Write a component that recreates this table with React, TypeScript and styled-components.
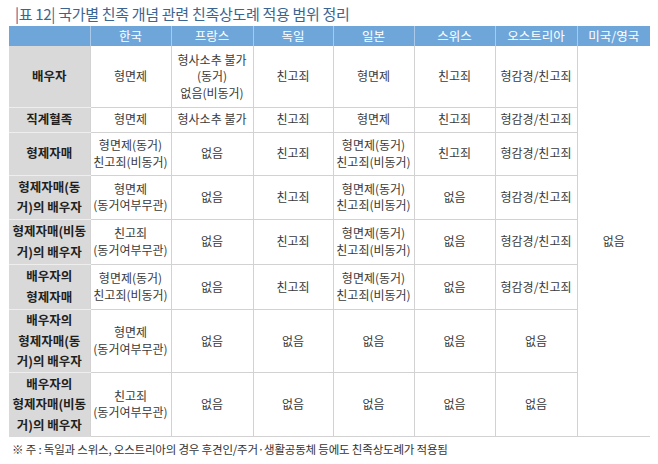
import styled, { createGlobalStyle } from 'styled-components';

const GlobalStyle = createGlobalStyle`
    html, body {
        margin: 0;
        padding: 0;
        background: #ffffff;
    }
    body {
        font-family: "Noto Sans CJK KR", "Noto Sans", sans-serif;
        color: #333;
    }
`;

const COUNTRIES = ['한국', '프랑스', '독일', '일본', '스위스', '오스트리아', '미국/영국'];
const COL_WIDTHS = [81, 81, 82, 80, 81, 81, 82, 73];

interface RowData {
    label: string[];
    height: number;
    cells: string[][];
}

const ROWS: RowData[] = [
    {
        label: ['배우자'],
        height: 61,
        cells: [['형면제'], ['형사소추 불가', '(동거)', '없음(비동거)'], ['친고죄'], ['형면제'], ['친고죄'], ['형감경/친고죄']],
    },
    {
        label: ['직계혈족'],
        height: 25,
        cells: [['형면제'], ['형사소추 불가'], ['친고죄'], ['형면제'], ['친고죄'], ['형감경/친고죄']],
    },
    {
        label: ['형제자매'],
        height: 43,
        cells: [['형면제(동거)', '친고죄(비동거)'], ['없음'], ['친고죄'], ['형면제(동거)', '친고죄(비동거)'], ['친고죄'], ['형감경/친고죄']],
    },
    {
        label: ['형제자매(동', '거)의 배우자'],
        height: 44,
        cells: [['형면제', '(동거여부무관)'], ['없음'], ['친고죄'], ['형면제(동거)', '친고죄(비동거)'], ['없음'], ['형감경/친고죄']],
    },
    {
        label: ['형제자매(비동', '거)의 배우자'],
        height: 45,
        cells: [['친고죄', '(동거여부무관)'], ['없음'], ['친고죄'], ['형면제(동거)', '친고죄(비동거)'], ['없음'], ['형감경/친고죄']],
    },
    {
        label: ['배우자의', '형제자매'],
        height: 45,
        cells: [['형면제(동거)', '친고죄(비동거)'], ['없음'], ['친고죄'], ['형면제(동거)', '친고죄(비동거)'], ['없음'], ['형감경/친고죄']],
    },
    {
        label: ['배우자의', '형제자매(동', '거)의 배우자'],
        height: 63,
        cells: [['형면제', '(동거여부무관)'], ['없음'], ['없음'], ['없음'], ['없음'], ['없음']],
    },
    {
        label: ['배우자의', '형제자매(비동', '거)의 배우자'],
        height: 64,
        cells: [['친고죄', '(동거여부무관)'], ['없음'], ['없음'], ['없음'], ['없음'], ['없음']],
    },
];

const Lines = ({ lines }: { lines: string[] }) => (
    <>
        {lines.map((line, i) => (
            <Line key={line + i}>{line}</Line>
        ))}
    </>
);

const App = () => {
    const totalBody = ROWS.reduce((sum, row) => sum + row.height, 0);

    return (
        <Page>
            <GlobalStyle />
            <Title>|표 12| 국가별 친족 개념 관련 친족상도례 적용 범위 정리</Title>
            <Table>
                <colgroup>
                    {COL_WIDTHS.map((w, i) => (
                        <col key={i} style={{ width: w }} />
                    ))}
                </colgroup>
                <thead>
                    <tr>
                        <HeadCell />
                        {COUNTRIES.map((c) => (
                            <HeadCell key={c}>{c}</HeadCell>
                        ))}
                    </tr>
                </thead>
                <tbody>
                    {ROWS.map((row, r) => (
                        <tr key={r} style={{ height: row.height }}>
                            <RowHead $last={r === ROWS.length - 1}>
                                <Lines lines={row.label} />
                            </RowHead>
                            {row.cells.map((cell, c) => (
                                <Cell key={c}>
                                    <Lines lines={cell} />
                                </Cell>
                            ))}
                            {r === 0 && (
                                <MergedCell rowSpan={ROWS.length} style={{ height: totalBody }}>
                                    없음
                                </MergedCell>
                            )}
                        </tr>
                    ))}
                </tbody>
            </Table>
            <Note>※ 주 : 독일과 스위스, 오스트리아의 경우 후견인/주거·생활공동체 등에도 친족상도례가 적용됨</Note>
        </Page>
    );
};

const Page = styled.div`
    width: 658px;
    height: 464px;
    padding: 0 8px 0 9px;
    box-sizing: border-box;
    overflow: hidden;
`;

const Title = styled.div`
    height: 26px;
    padding-left: 6px;
    font-size: 15px;
    line-height: 28px;
    color: #3a6591;
    letter-spacing: -0.3px;
    white-space: nowrap;
`;

const Table = styled.table`
    width: 641px;
    border-collapse: collapse;
    table-layout: fixed;
    font-size: 12px;
    line-height: 16.5px;
    color: #3a3a3a;
`;

const HeadCell = styled.th`
    height: 20px;
    padding: 0;
    background: #6fa6da;
    color: #ffffff;
    font-size: 12.5px;
    font-weight: normal;
    text-align: center;
    border-left: 1px solid #a9caea;
    &:first-child {
        border-left: none;
    }
`;

const RowHead = styled.th<{ $last: boolean }>`
    padding: 0;
    background: #d9d9d9;
    color: #1f1f1f;
    font-weight: bold;
    font-size: 12.5px;
    line-height: 20.5px;
    text-align: center;
    border-bottom: 1px solid ${(p) => (p.$last ? '#d9d9d9' : '#eeeeee')};
`;

const Cell = styled.td`
    padding: 0;
    text-align: center;
    vertical-align: middle;
    border: 1px solid #d2d2d2;
    border-top: none;
`;

const MergedCell = styled.td`
    padding: 0;
    text-align: center;
    vertical-align: middle;
    border-left: 1px solid #d2d2d2;
    border-bottom: 1px solid #d2d2d2;
`;

const Line = styled.div`
    white-space: nowrap;
`;

const Note = styled.div`
    padding: 3px 0 0 3px;
    font-size: 11.5px;
    line-height: 18px;
    color: #333;
    letter-spacing: -0.2px;
    white-space: nowrap;
`;

export default App;
